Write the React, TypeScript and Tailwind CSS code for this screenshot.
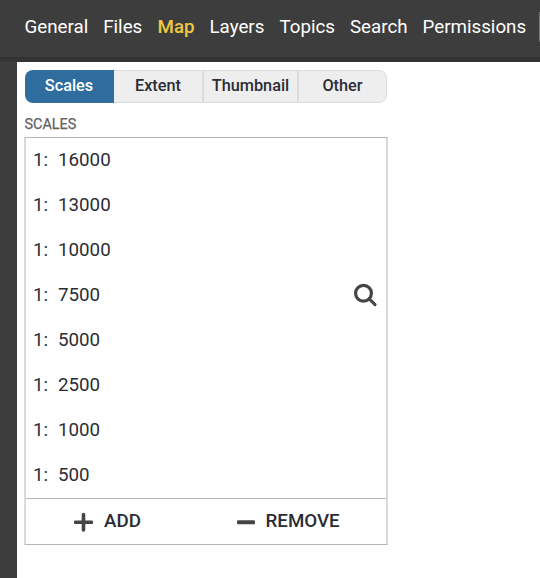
import React from "react";

const NAV = [
  { label: "General", w: "w-[78.7px]" },
  { label: "Files", w: "w-[54.3px]" },
  { label: "Map", w: "w-[52px]" },
  { label: "Layers", w: "w-[70px]" },
  { label: "Topics", w: "w-[70.5px]" },
  { label: "Search", w: "w-[72.5px]" },
  { label: "Permissions", w: "w-[116.5px]" },
];
const TABS = [
  { label: "Scales", style: "w-[89px] rounded-l-[8px] bg-[#2f6d9f] text-white leading-[31px] pr-px" },
  { label: "Extent", style: "w-[90px] border-y border-r-2 border-[#dcdcdc] bg-[#eeeeee] leading-[29px]" },
  { label: "Thumbnail", style: "w-[95px] border-y border-r-2 border-[#dcdcdc] bg-[#eeeeee] leading-[29px]" },
  { label: "Other", style: "w-[88px] rounded-r-[8px] border-y border-r border-[#dcdcdc] bg-[#eeeeee] leading-[29px]" },
];
const SCALES = [16000, 13000, 10000, 7500, 5000, 2500, 1000, 500];

export default function App() {
  return (
    <div className="flex h-[578px] w-[540px] flex-col overflow-hidden bg-white font-['Roboto',sans-serif] text-[#2b2d35]">
      <header className="flex h-[57px] shrink-0 bg-[#3d3d3d] pl-[24.5px] pt-[13px] text-[18.75px] leading-[28px] text-white">
        {NAV.map((n) => (
          <span key={n.label} className={`${n.w} shrink-0 whitespace-nowrap ${n.label === "Map" ? "font-medium text-[#f2c744]" : ""}`}>{n.label}</span>
        ))}
        <span className="-mt-px h-[30px] w-2 shrink-0 bg-[#777]" />
      </header>
      <div className="flex h-[5px] shrink-0">
        <div className="w-[17px] bg-linear-to-b from-[#323232] to-[#383838]" />
        <div className="flex-1 bg-[#333333]" />
      </div>
      <div className="flex flex-1">
        <aside className="w-[17px] shrink-0 bg-[#3d3d3d]" />
        <main className="pl-[7px] pt-2">
          <div className="ml-px flex h-[33px] text-[16.3px] font-medium">
            {TABS.map((t) => (
              <span key={t.label} className={`shrink-0 text-center ${t.style}`}>{t.label}</span>
            ))}
          </div>
          <h2 className="ml-[0.5px] mt-[11px] h-[23px] text-[14.4px] font-normal leading-[22px] text-[#606266] [-webkit-text-stroke:0.25px_#606266]">SCALES</h2>
          <section className="h-[408px] w-[364px] border-x-2 border-y border-x-[#dadada] border-y-[#b5b5b5] text-[18.75px]">
            <div className="flex h-[360px]">
              <div className="flex-1">
                {SCALES.map((s) => (
                  <div key={s} className="flex h-[45px] items-center pl-[7px]"><span className="w-[25px]">1:</span>{s}</div>
                ))}
              </div>
              <div className="flex items-start pr-[9px] pt-[145px]">
                <svg width="23" height="24" viewBox="0 0 23 24" fill="none" stroke="#444"><circle cx="9.500" cy="10.300" r="7.900" strokeWidth="3.2" /><path d="m15.400 16 5.600 5.600" strokeWidth="3.1" strokeLinecap="round" /></svg>
              </div>
            </div>
            <footer className="flex h-[46px] border-t border-[#b5b5b5] pl-[48px] font-medium">
              <button className="flex w-[163px] items-center gap-[11px]"><svg width="19" height="20" viewBox="0 0 19 20"><path d="M9.500 2.500v15.500M1.500 10.300h16" stroke="#444" strokeWidth="3.6" strokeLinecap="round" /></svg><span className="-mt-px">ADD</span></button>
              <button className="flex items-center gap-[10.500px]"><svg width="18" height="20" viewBox="0 0 18 20"><rect y="8.300" width="18" height="4" rx="1.200" fill="#444" /></svg><span className="-mt-px">REMOVE</span></button>
            </footer>
          </section>
        </main>
      </div>
    </div>
  );
}
